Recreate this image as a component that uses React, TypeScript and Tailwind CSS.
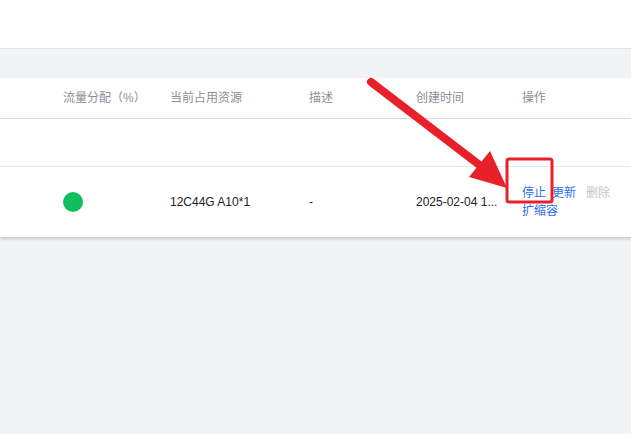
import React from "react";

const font = { fontFamily: '"Liberation Sans", "Noto Sans CJK SC", sans-serif' };

function Annotation() {
  return (
    <svg className="absolute inset-0 pointer-events-none" width="631" height="434" viewBox="0 0 631 434">
      <line x1="371" y1="82" x2="486" y2="170" stroke="#e8202a" strokeWidth="8" strokeLinecap="round" />
      <polygon points="469,177 490,151 507,188" fill="#e8202a" />
      <rect x="507" y="159" width="45" height="43" rx="2" fill="none" stroke="#e8202a" strokeWidth="3" />
    </svg>
  );
}

export default function App() {
  return (
    <div className="relative w-[631px] h-[434px] overflow-hidden bg-[#f2f3f7] text-[12px]" style={font}>
      <div className="h-[49px] bg-white border-b border-[#e4e6eb]"></div>
      <div className="pt-[29px]">
        <div className="bg-white shadow-[0_2px_3px_rgba(0,0,0,0.18)]">
          <div className="grid grid-cols-[63px_107px_139px_107px_106px_1fr] h-[41px] items-center border-b border-[#d5d9e2] text-[#8a8f99]">
            <div></div>
            <div>流量分配（%）</div>
            <div>当前占用资源</div>
            <div>描述</div>
            <div>创建时间</div>
            <div>操作</div>
          </div>
          <div className="h-[48px] border-b border-[#e6e8ed]"></div>
          <div className="grid grid-cols-[63px_107px_139px_107px_106px_1fr] h-[70px] items-center text-[#222]">
            <div></div>
            <div>
              <div className="w-[20px] h-[20px] rounded-full bg-[#0fbf5b]"></div>
            </div>
            <div>12C44G A10*1</div>
            <div>-</div>
            <div className="truncate pr-[10px]">2025-02-04 1...</div>
            <div className="w-[96px] flex flex-wrap leading-[18px] text-[#2b6cf6]">
              <span className="mr-[6px]">停止</span>
              <span className="mr-[10px]">更新</span>
              <span className="text-[#c4c7cd]">删除</span>
              <span>扩缩容</span>
            </div>
          </div>
        </div>
      </div>
      <Annotation />
    </div>
  );
}
